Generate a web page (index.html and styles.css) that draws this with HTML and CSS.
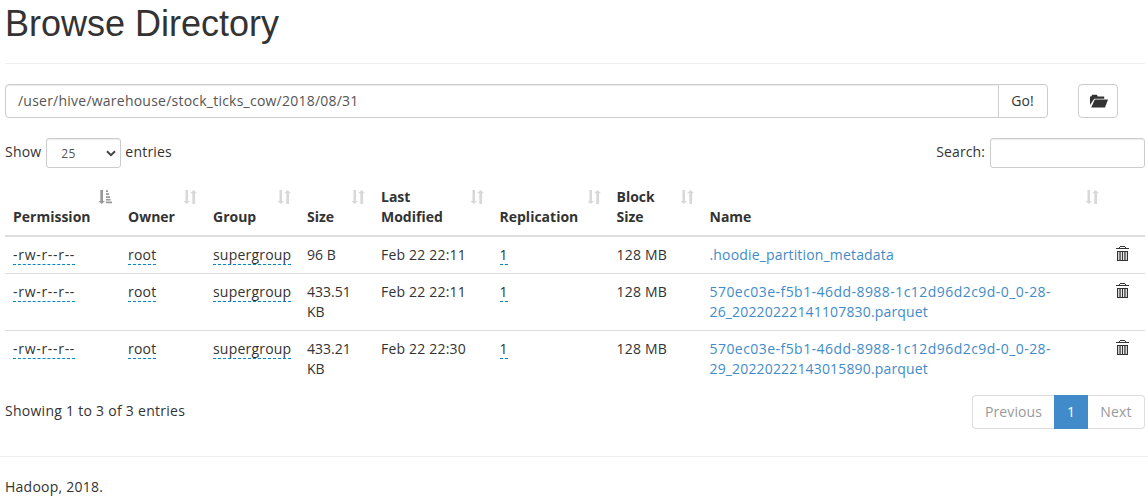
FILE: index.html
```
<!DOCTYPE html>
<html lang="en">
<head>
    <meta charset="UTF-8">
    <title>Browsing HDFS</title>
    <link rel="stylesheet" href="styles.css">
</head>
<body>
    <!-- shared icons -->
    <svg class="sprite" width="0" height="0">
        <symbol id="icon-sort" viewBox="0 0 14 14">
            <path d="M2.500 0h2.500v11H7L3.800 14 .4 11h2.100zM9.300 14V3.200H7L10.600 0 14 3.200h-1.900V14z"/>
        </symbol>
        <symbol id="icon-sort-asc" viewBox="0 0 14 14">
            <path d="M2.300 0h2.700v11H7L3.700 14 .300 11h2zM8 0.300h2v1.700h-2zM8 3.300h3v1.700h-3zM8 6.300h4v1.700h-4zM8 9h4.500v1.500h-4.500zM8 11.500h6v1.800h-6z"/>
        </symbol>
        <symbol id="icon-trash" viewBox="0 0 13 15">
            <path d="M4 0h5v1h1v1h3v1H0V2h3V1h1zM4 1v1h5V1zM1 5h11v10H1zM2.200 6v8h1.200V6zM4.700 6v8h1.200V6zM7.100 6v8h1.200V6zM9.600 6v8h1.200V6z" fill-rule="evenodd"/>
        </symbol>
    </svg>

    <div class="container">
        <div class="page-header">
            <h1>Browse Directory</h1>
        </div>

        <form class="path-row">
            <div class="input-group">
                <input type="text" class="form-control" id="directory" value="/user/hive/warehouse/stock_ticks_cow/2018/08/31">
                <button type="button" class="btn btn-go">Go!</button>
            </div>
            <button type="button" class="btn btn-folder" title="Create Directory">
                <svg width="18" height="14" viewBox="0 0 18 14"><path d="M0 11V2.500h1.200L2.200.8h4.600l1 1.700h6.400v2.200H4.200zM4.800 5.600H18L15 13.500H1.200z"/></svg>
            </button>
        </form>

        <div class="table-controls">
            <label class="length">Show
                <span class="select">25
                    <svg width="10" height="7" viewBox="0 0 10 7"><path d="M1 1.200l4 4 4-4"/></svg>
                </span>
                entries
            </label>
            <label class="filter">Search: <input type="search"></label>
        </div>

        <table class="table">
            <thead>
                <tr>
                    <th class="col-permission">Permission<svg class="sort active"><use href="#icon-sort-asc"/></svg></th>
                    <th class="col-owner">Owner<svg class="sort"><use href="#icon-sort"/></svg></th>
                    <th class="col-group">Group<svg class="sort"><use href="#icon-sort"/></svg></th>
                    <th class="col-size">Size<svg class="sort"><use href="#icon-sort"/></svg></th>
                    <th class="col-modified">Last<br>Modified<svg class="sort"><use href="#icon-sort"/></svg></th>
                    <th class="col-replication">Replication<svg class="sort"><use href="#icon-sort"/></svg></th>
                    <th class="col-block">Block<br>Size<svg class="sort"><use href="#icon-sort"/></svg></th>
                    <th class="col-name">Name<svg class="sort"><use href="#icon-sort"/></svg></th>
                    <th class="col-trash"></th>
                </tr>
            </thead>
            <tbody>
                <tr>
                    <td><span class="editable perm">-rw-r--r--</span></td>
                    <td><span class="editable">root</span></td>
                    <td><span class="editable">supergroup</span></td>
                    <td class="size">96 B</td>
                    <td>Feb 22 22:11</td>
                    <td><span class="editable">1</span></td>
                    <td>128 MB</td>
                    <td><a href="#">.hoodie_partition_metadata</a></td>
                    <td><svg class="trash"><use href="#icon-trash"/></svg></td>
                </tr>
                <tr>
                    <td><span class="editable perm">-rw-r--r--</span></td>
                    <td><span class="editable">root</span></td>
                    <td><span class="editable">supergroup</span></td>
                    <td class="size">433.51<br>KB</td>
                    <td>Feb 22 22:11</td>
                    <td><span class="editable">1</span></td>
                    <td>128 MB</td>
                    <td><a href="#"><span class="block-id">570ec03e-f5b1-46dd-8988-1c12d96d2c9d-0_0-28-</span><br>26_20220222141107830.parquet</a></td>
                    <td><svg class="trash"><use href="#icon-trash"/></svg></td>
                </tr>
                <tr>
                    <td><span class="editable perm">-rw-r--r--</span></td>
                    <td><span class="editable">root</span></td>
                    <td><span class="editable">supergroup</span></td>
                    <td class="size">433.21<br>KB</td>
                    <td>Feb 22 22:30</td>
                    <td><span class="editable">1</span></td>
                    <td>128 MB</td>
                    <td><a href="#"><span class="block-id">570ec03e-f5b1-46dd-8988-1c12d96d2c9d-0_0-28-</span><br>29_20220222143015890.parquet</a></td>
                    <td><svg class="trash"><use href="#icon-trash"/></svg></td>
                </tr>
            </tbody>
        </table>

        <div class="table-footer">
            <div class="info">Showing 1 to 3 of 3 entries</div>
            <ul class="pagination">
                <li class="previous">Previous</li>
                <li class="active">1</li>
                <li class="next">Next</li>
            </ul>
        </div>
    </div>

    <footer>
        <p>Hadoop, 2018.</p>
    </footer>
</body>
</html>
```
FILE: styles.css
```
* {
    box-sizing: border-box;
}

body {
    margin: 0;
    font-family: "Open Sans", "Noto Sans", sans-serif;
    font-size: 14px;
    line-height: 20px;
    color: #333;
    background-color: #fff;
    overflow: hidden;
}

.sprite {
    display: block;
}

.container {
    width: 1140px;
    margin-left: 5px;
}

.page-header {
    height: 64px;
    border-bottom: 1px solid #eee;
}

h1 {
    margin: 0;
    padding-top: 4px;
    font-family: "Liberation Sans", Arial, sans-serif;
    font-size: 36px;
    font-weight: 500;
    line-height: 40px;
}

input,
button {
    font-family: inherit;
    font-size: 14px;
    line-height: 20px;
    color: #333;
}

.path-row {
    display: flex;
    gap: 30px;
    margin-top: 20px;
}

.input-group {
    display: flex;
    width: 1043px;
}

.form-control {
    flex: 1;
    height: 34px;
    padding: 5px 12px 7px;
    border: 1px solid #ccc;
    border-radius: 4px 0 0 4px;
    letter-spacing: 0.23px;
    color: #555;
    box-shadow: inset 0 1px 1px rgba(0, 0, 0, 0.075);
}

.btn {
    height: 34px;
    padding: 0;
    border: 1px solid #ccc;
    border-radius: 4px;
    background-color: #fff;
}

.btn-go {
    width: 50px;
    margin-left: -1px;
    padding-right: 1px;
    border-radius: 0 4px 4px 0;
}

.btn-folder {
    width: 40px;
}

.btn-folder svg {
    display: block;
    margin: 0 0 0 11px;
    fill: #333;
}

.table-controls {
    display: flex;
    justify-content: space-between;
    margin-top: 20px;
}

.length,
.filter {
    display: flex;
    align-items: center;
    height: 30px;
    padding-bottom: 2px;
    letter-spacing: 0.2px;
}

.filter {
    letter-spacing: 0.1px;
}

.select {
    display: flex;
    align-items: center;
    justify-content: space-between;
    width: 75px;
    height: 30px;
    margin: 2px 4px 0 5px;
    padding: 1px 4px 0 14px;
    border: 1px solid #ccc;
    border-radius: 3px;
    font-size: 12px;
    color: #555;
    box-shadow: inset 0 1px 1px rgba(0, 0, 0, 0.075);
}

.select svg {
    fill: none;
    stroke: #444;
    stroke-width: 2;
}

.filter input {
    width: 155px;
    height: 30px;
    margin: 2px 0 0 5px;
    border: 1px solid #ccc;
    border-radius: 3px;
    box-shadow: inset 0 1px 1px rgba(0, 0, 0, 0.075);
}

.table {
    width: 1140px;
    margin-top: 11px;
    table-layout: fixed;
    border-collapse: separate;
    border-spacing: 0;
}

th,
td {
    padding: 8px;
    text-align: left;
    vertical-align: top;
    white-space: nowrap;
}

th {
    position: relative;
    vertical-align: bottom;
    border-bottom: 2px solid #ddd;
}

td {
    letter-spacing: 0.2px;
}

tbody tr + tr td {
    border-top: 1px solid #ddd;
}

.col-permission { width: 115px; }
.col-owner { width: 85px; }
.col-group { width: 94px; }
.col-size { width: 74px; }
.col-modified { width: 118.5px; }
.col-replication { width: 117px; }
.col-block { width: 93px; }
.col-name { width: 405.5px; }
.col-trash { width: 38px; }

/* sort arrows sit in the top right corner of the header cell */
.sort {
    position: absolute;
    top: 11px;
    right: 8px;
    width: 14px;
    height: 14px;
    fill: #d8d8d8;
}

.sort.active {
    fill: #999;
}

.size {
    letter-spacing: 0;
}

.editable {
    display: inline-block;
    height: 20px;
    border-bottom: 1px dashed #08c;
    vertical-align: top;
}

.perm {
    letter-spacing: 0.7px;
}

a {
    color: #428bca;
    letter-spacing: 0.16px;
    text-decoration: none;
}

.block-id {
    letter-spacing: 0.45px;
}

.trash {
    display: block;
    width: 13px;
    height: 15px;
    margin: 1px 0 0 1px;
    fill: #333;
}

.table-footer {
    display: flex;
    justify-content: space-between;
    margin-top: 8px;
}

.info {
    padding-top: 6px;
    letter-spacing: 0.27px;
}

.pagination {
    display: flex;
    margin: 0;
    padding: 0;
    list-style: none;
}

.pagination li {
    height: 34px;
    padding: 6px 0;
    border: 1px solid #ddd;
    text-align: center;
    color: #999;
}

.pagination .previous {
    width: 82px;
    border-right: 0;
    border-radius: 4px 0 0 4px;
    letter-spacing: 0.1px;
}

.pagination .active {
    width: 34px;
    border-color: #428bca;
    background-color: #428bca;
    color: #fff;
}

.pagination .next {
    width: 57px;
    border-left: 0;
    border-radius: 0 4px 4px 0;
    letter-spacing: 0.2px;
}

footer {
    margin-top: 27px;
    padding: 20px 5px 0;
    border-top: 1px solid #eee;
}

footer p {
    margin: 0;
    letter-spacing: 0.25px;
}
```
